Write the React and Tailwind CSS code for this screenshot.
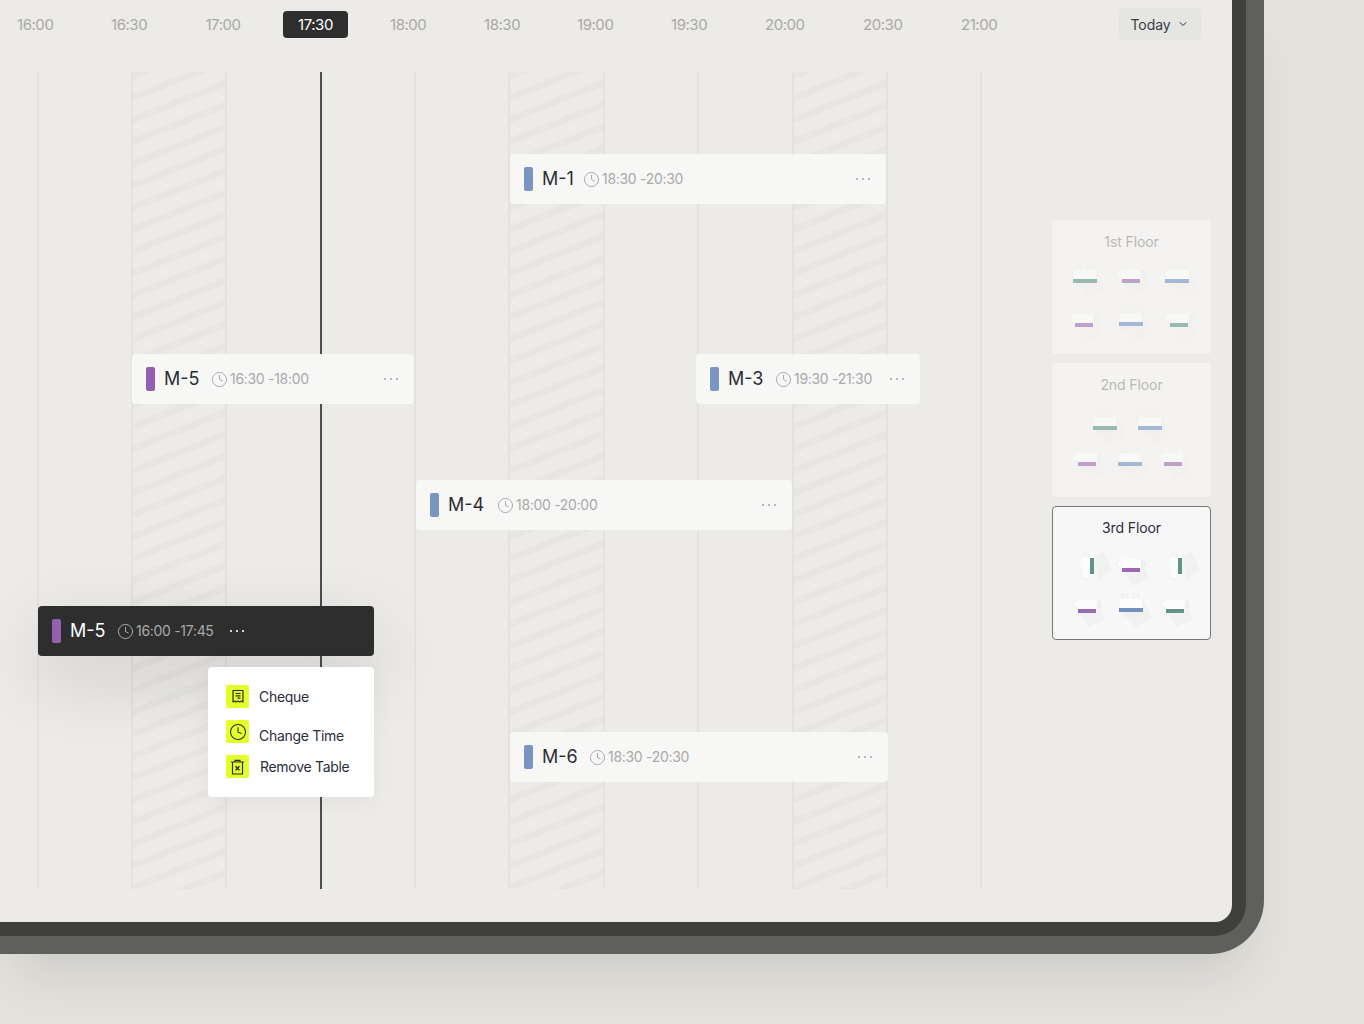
import React from 'react';
import { ChevronDown, Clock } from 'lucide-react';

const hours = [
  { label: '16:00', className: 'ml-[17px] w-[36px] text-center text-[#a9a9a5]' },
  { label: '16:30', className: 'ml-[58px] w-[36px] text-center text-[#a9a9a5]' },
  { label: '17:00', className: 'ml-[58px] w-[36px] text-center text-[#a9a9a5]' },
  { label: '17:30', className: 'ml-[42px] w-[65px] h-[27px] mt-[3px] flex items-center justify-center rounded-[4px] bg-[#2e2e2e] text-white' },
  { label: '18:00', className: 'ml-[42px] w-[36px] text-center text-[#a9a9a5]' },
  { label: '18:30', className: 'ml-[58px] w-[36px] text-center text-[#a9a9a5]' },
  { label: '19:00', className: 'ml-[57px] w-[36px] text-center text-[#a9a9a5]' },
  { label: '19:30', className: 'ml-[58px] w-[36px] text-center text-[#a9a9a5]' },
  { label: '20:00', className: 'ml-[58px] w-[39px] text-center text-[#a9a9a5]' },
  { label: '20:30', className: 'ml-[59px] w-[38px] text-center text-[#a9a9a5]' },
  { label: '21:00', className: 'ml-[60px] w-[34px] text-center text-[#a9a9a5]' },
];

const stripes = 'bg-[repeating-linear-gradient(158.4deg,#e7e6e2_0px,#e7e6e2_7px,#ecebe7_7px,#ecebe7_20.4px)]';

const columns = [
  { id: 1, className: 'w-[94px]' },
  { id: 2, className: `w-[94px] ${stripes}` },
  { id: 3, className: 'w-[189px]' },
  { id: 4, className: 'w-[94px]' },
  { id: 5, className: `w-[95px] ${stripes}` },
  { id: 6, className: 'w-[94px]' },
  { id: 7, className: 'w-[95px]' },
  { id: 8, className: `w-[94px] ${stripes}` },
  { id: 9, className: 'w-[94px]' },
  { id: 10, className: 'w-[2px]' },
];

const bookings = [
  { name: 'M-1', title: 'w-[41px]', time: '18:30 -20:30', bar: 'bg-[#7a95c0]', pos: 'left-[510px] top-[82px] w-[376px]' },
  { name: 'M-5', title: 'w-[47px]', time: '16:30 -18:00', bar: 'bg-[#9160ae]', pos: 'left-[132px] top-[282px] w-[282px]' },
  { name: 'M-3', title: 'w-[47px]', time: '19:30 -21:30', bar: 'bg-[#7a95c0]', pos: 'left-[696px] top-[282px] w-[224px]' },
  { name: 'M-4', title: 'w-[49px]', time: '18:00 -20:00', bar: 'bg-[#7a95c0]', pos: 'left-[416px] top-[408px] w-[376px]' },
  { name: 'M-6', title: 'w-[47px]', time: '18:30 -20:30', bar: 'bg-[#7a95c0]', pos: 'left-[510px] top-[660px] w-[378px]' },
];

const GREEN = '#5f9488';
const PURPLE = '#9a6bb0';
const BLUE = '#7090c0';

// one table seen from above: top, chairs and the long shadow it throws
const Table = ({ x, y, kind, color }) => {
  if (kind === 'side') {
    return (
      <g>
        <polygon points={`${x + 2},${y - 9} ${x + 12},${y - 14} ${x + 20},${y + 4} ${x + 6},${y + 14}`} fill="#f1f1f0" />
        <rect x={x - 10} y={y - 13} width="7" height="6" rx="3" fill="#f6f6f5" stroke="#ebebe9" />
        <rect x={x - 10} y={y + 7} width="7" height="6" rx="3" fill="#fcfcfc" stroke="#efefed" />
        <rect x={x - 10} y={y - 9} width="9" height="18" fill="#fcfcfc" />
        <rect x={x - 2} y={y - 8} width="4" height="16" fill={color} />
      </g>
    );
  }
  if (kind === 'wide') {
    return (
      <g>
        <polygon points={`${x + 12},${y - 11} ${x + 21},${y + 8} ${x + 4},${y + 17} ${x - 9},${y + 2}`} fill="#f1f1f0" />
        <path d={`M${x - 9} ${y - 11} v-2 q0 -3 3 -3 t3 3 v2 M${x + 2} ${y - 11} v-2 q0 -3 3 -3 t3 3 v2`} fill="none" stroke="#ebebe9" />
        <rect x={x - 11} y={y - 11} width="22" height="10" fill="#fcfcfc" />
        <rect x={x - 12} y={y - 2} width="24" height="4" fill={color} />
        <path d={`M${x - 9} ${y + 3} q0 3 3 3 t3 -3 M${x + 2} ${y + 3} q0 3 3 3 t3 -3`} fill="none" stroke="#ebebe9" />
      </g>
    );
  }
  return (
    <g>
      <polygon points={`${x + 9},${y - 10} ${x + 19},${y + 8} ${x + 2},${y + 16} ${x - 7},${y + 2}`} fill="#f1f1f0" />
      <rect x={x - 14} y={y - 10} width="6" height="7" rx="3" fill="#fcfcfc" stroke="#f0f0ee" />
      <rect x={x + 8} y={y - 10} width="6" height="7" rx="3" fill="#efefed" stroke="#ebebe9" />
      <rect x={x - 10} y={y - 11} width="20" height="10" fill="#fcfcfc" />
      <rect x={x - 9} y={y - 2} width="18" height="4" fill={color} />
    </g>
  );
};

const floors = [
  {
    name: '1st Floor',
    active: false,
    tables: [
      { x: 32, y: 25, kind: 'wide', color: GREEN },
      { x: 78, y: 25, kind: 'small', color: PURPLE },
      { x: 124, y: 25, kind: 'wide', color: BLUE },
      { x: 31, y: 69, kind: 'small', color: PURPLE },
      { x: 78, y: 68, kind: 'wide', color: BLUE },
      { x: 126, y: 69, kind: 'small', color: GREEN },
    ],
  },
  {
    name: '2nd Floor',
    active: false,
    tables: [
      { x: 52, y: 29, kind: 'wide', color: GREEN },
      { x: 97, y: 29, kind: 'wide', color: BLUE },
      { x: 34, y: 65, kind: 'small', color: PURPLE },
      { x: 77, y: 65, kind: 'wide', color: BLUE },
      { x: 120, y: 65, kind: 'small', color: PURPLE },
    ],
  },
  {
    name: '3rd Floor',
    active: true,
    tables: [
      { x: 39, y: 24, kind: 'side', color: GREEN },
      { x: 78, y: 28, kind: 'small', color: PURPLE },
      { x: 127, y: 24, kind: 'side', color: GREEN },
      { x: 34, y: 69, kind: 'small', color: PURPLE },
      { x: 78, y: 68, kind: 'wide', color: BLUE },
      { x: 122, y: 69, kind: 'small', color: GREEN },
    ],
  },
];

const Dots = ({ className }) => (
  <svg className={className} width="16" height="4" viewBox="0 0 16 4" fill="currentColor">
    <circle cx="2" cy="2" r="1.1" />
    <circle cx="8" cy="2" r="1.1" />
    <circle cx="14" cy="2" r="1.1" />
  </svg>
);

const BookingCard = ({ name, title, time, bar, pos }) => (
  <div className={`absolute ${pos} h-[50px] flex items-center pl-[14px] pr-[15px] rounded-[4px] bg-[#f7f7f6]`}>
    <span className={`w-[9px] h-[24px] rounded-[2px] ${bar}`} />
    <span className={`ml-[9px] ${title} -mt-[2px] text-[18px] text-[#2b2d33] whitespace-nowrap`}>{name}</span>
    <Clock className="text-[#a9abb3]" size={17} strokeWidth={1.4} />
    <span className="ml-[2px] -mt-[2px] text-[14px] tracking-[-0.3px] text-[#a9a9a9] whitespace-nowrap">{time}</span>
    <Dots className="ml-auto text-[#a5a7ad]" />
  </div>
);

const ReceiptIcon = () => (
  <svg width="14" height="15" viewBox="0 0 14 15" fill="none" stroke="#2b2d33" strokeWidth="1.2">
    <path d="M2 1.5h10v11.5l-1.6-1-1.7 1-1.7-1-1.7 1-1.6-1-1.7 1z" strokeLinejoin="round" />
    <path d="M4.5 4.5h5M4.5 6.8h5M6.5 9.2h3" />
  </svg>
);

const TrashIcon = () => (
  <svg width="15" height="16" viewBox="0 0 15 16" fill="none" stroke="#2b2d33" strokeWidth="1.2">
    <path d="M1 3h13M5 3V1.3h5V3M2.5 3v12h10V3" />
    <path d="M5.6 7.2l3.8 4M9.4 7.2l-3.8 4" strokeWidth="1.4" />
  </svg>
);

const IconBox = ({ children }) => (
  <span className="w-[23px] h-[23px] flex items-center justify-center rounded-[2px] bg-[#e4ff2a]">{children}</span>
);

const Menu = () => (
  <div className="absolute left-[208px] top-[595px] w-[166px] h-[130px] pt-[18px] pl-[18px] flex flex-col gap-[12px] rounded-[4px] bg-white text-[14px] tracking-[-0.3px] text-[#2b2d3a] shadow-[0_4px_24px_rgba(0,0,0,0.05)]">
    <div className="h-[23px] flex items-center gap-[10px]">
      <IconBox><ReceiptIcon /></IconBox>
      <span>Cheque</span>
    </div>
    <div className="h-[23px] flex items-center gap-[10px]">
      <IconBox><Clock size={18} strokeWidth={1.4} color="#2b2d33" /></IconBox>
      <span className="translate-y-[4px]">Change Time</span>
    </div>
    <div className="h-[23px] flex items-center gap-[11px]">
      <IconBox><TrashIcon /></IconBox>
      <span>Remove Table</span>
    </div>
  </div>
);

const FloorCard = ({ name, active, tables }) => (
  <div className={`w-[159px] h-[134px] rounded-[4px] border ${active ? 'border-[#77777a] bg-[#f7f7f7]' : 'border-transparent bg-[#f4f3f1]'}`}>
    <div className={`mt-[11px] h-[20px] text-center text-[14px] leading-[20px] tracking-[-0.1px] ${active ? 'text-[#2b2d3a]' : 'text-[#b9b9b7]'}`}>{name}</div>
    <svg className={`mt-[4px] ${active ? '' : 'opacity-60'}`} width="157" height="96" viewBox="0 0 157 96">
      {tables.map((t, i) => <Table key={i} {...t} />)}
    </svg>
  </div>
);

export default function App() {
  return (
    <div className="relative w-[1364px] h-[1024px] overflow-hidden bg-[#e2e1dc] font-['Inter',sans-serif]">
      <div className="w-[1264px] h-[954px] pr-[18px] pb-[18px] rounded-br-[54px] bg-[#5f605b] shadow-[0_36px_50px_-18px_rgba(0,0,0,0.1)]">
        <div className="w-full h-full pr-[14px] pb-[14px] rounded-br-[32px] bg-[#3f3f3d]">
          <div className="w-full h-full rounded-br-[17px] bg-[#ecebe7]">
            {/* Time header */}
            <header className="h-[50px] pt-[8px] flex items-start">
              <div className="flex text-[15px] leading-[33px] tracking-[-0.45px]">
                {hours.map(h => (
                  <span key={h.label} className={h.className}>{h.label}</span>
                ))}
              </div>
              <button className="ml-auto mr-[31px] w-[82px] h-[32px] flex items-center justify-center gap-[7px] rounded-[3px] bg-[#e5e5e1] text-[14px] tracking-[-0.1px] text-[#3a3c46]">
                Today
                <ChevronDown size={12} strokeWidth={2} color="#2b2d33" />
              </button>
            </header>

            <div className="flex">
              {/* Timeline */}
              <div className="relative w-[1052px] h-[817px] mt-[22px] pl-[37px] flex">
                {columns.map(c => (
                  <div key={c.id} className={`h-full border-l-2 border-[#e3e2de] ${c.className}`} />
                ))}
                <div className="absolute left-[320px] top-0 w-[1.5px] h-full bg-[#4b4d57]" />

                {bookings.map(b => <BookingCard key={b.pos} {...b} />)}

                <div className="absolute left-[38px] top-[534px] w-[336px] h-[50px] flex items-center pl-[14px] rounded-[4px] bg-[#2e2e2e] shadow-[0_24px_70px_rgba(0,0,0,0.13)]">
                  <span className="w-[9px] h-[24px] rounded-[2px] bg-[#9160ae]" />
                  <span className="ml-[9px] w-[47px] -mt-[2px] text-[18px] text-white whitespace-nowrap">M-5</span>
                  <Clock className="text-[#a9a9a9]" size={17} strokeWidth={1.4} />
                  <span className="ml-[2px] -mt-[2px] text-[14px] tracking-[-0.3px] text-[#a9a9a9] whitespace-nowrap">16:00 -17:45</span>
                  <Dots className="ml-[15px] text-white" />
                </div>

                <Menu />
              </div>

              {/* Floors */}
              <aside className="pt-[170px] flex flex-col gap-[9px]">
                {floors.map(f => <FloorCard key={f.name} {...f} />)}
              </aside>
            </div>
          </div>
        </div>
      </div>
    </div>
  );
}
